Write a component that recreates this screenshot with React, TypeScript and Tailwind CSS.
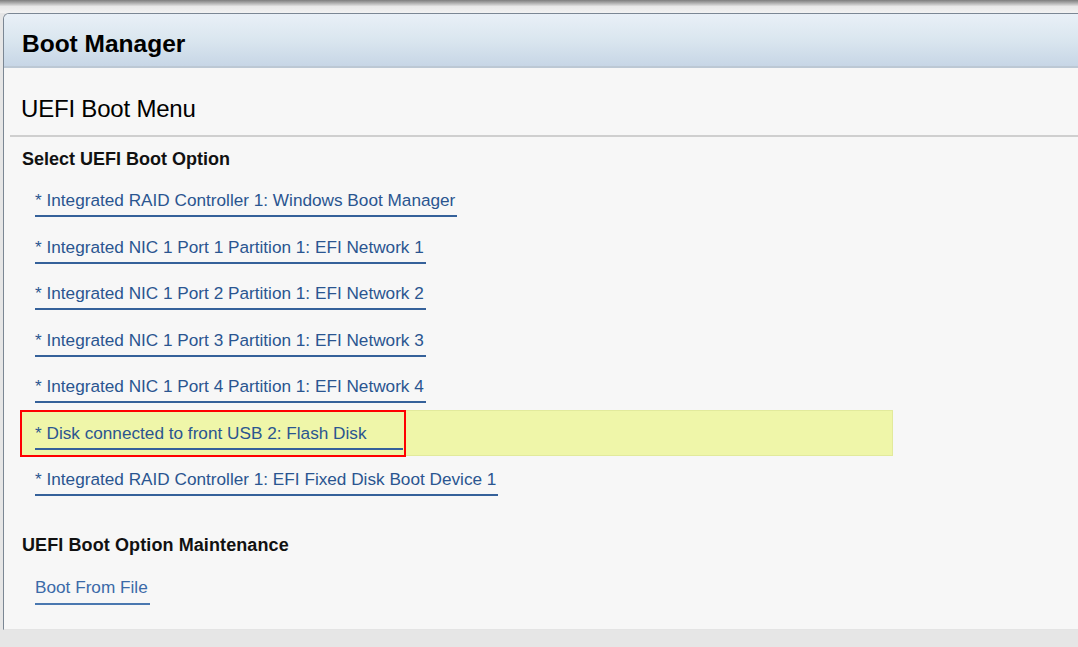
const bootOptions = [
  '* Integrated RAID Controller 1: Windows Boot Manager',
  '* Integrated NIC 1 Port 1 Partition 1: EFI Network 1',
  '* Integrated NIC 1 Port 2 Partition 1: EFI Network 2',
  '* Integrated NIC 1 Port 3 Partition 1: EFI Network 3',
  '* Integrated NIC 1 Port 4 Partition 1: EFI Network 4',
  '* Disk connected to front USB 2: Flash Disk',
  '* Integrated RAID Controller 1: EFI Fixed Disk Boot Device 1',
];

const SELECTED = 5;

function OptionRow({ label, selected }: { label: string; selected?: boolean }) {
  return (
    <div
      className={`relative ml-[16px] h-[46.5px] ${
        selected ? 'w-[873px] bg-[#eff6a9] border border-[#e2ea9c]' : ''
      }`}
    >
      {selected && (
        <span className="absolute -left-[1px] -top-[1px] h-[47px] w-[386px] border-2 border-[#ff0000]"></span>
      )}
      <a
        href="#"
        className={`inline-block ${selected ? 'ml-[14px] pt-[12px] pr-[37px]' : 'ml-[15px] pt-[13px] pr-[2px]'} pb-[5px] text-[17.2px] leading-[20px] text-[#2a5590] border-b-2 border-[#35619a]`}
      >
        {label}
      </a>
    </div>
  );
}

export default function App() {
  return (
    <div
      className="w-full h-[647px] bg-[#e6e6e6] overflow-hidden flex flex-col"
      style={{ fontFamily: '"Liberation Sans", Arial, sans-serif' }}
    >
      {/* top shadow strip */}
      <div className="h-[13px] bg-gradient-to-b from-[#7d7d7d] via-[#e8e8e8] to-[#f2f2f2]"></div>

      <div className="ml-[3px] h-[617px] rounded-tl-[6px] border-l border-t border-[#7b8794] bg-[#f7f7f7] border-b border-b-[#e4e4e4] overflow-hidden">
        {/* Header */}
        <div className="h-[54px] flex items-center pl-[18px] pt-[8px] bg-gradient-to-b from-[#e9f0f7] via-[#dae6ef] to-[#c7d6e6] border-b-2 border-[#bcc8d4]">
          <h1 className="text-[24.5px] font-bold text-black">Boot Manager</h1>
        </div>

        <div className="ml-[6px] pl-[11px] pt-[27px] pb-[12px] border-b-2 border-[#cfcfcf]">
          <h2 className="text-[24px] leading-[28px] text-black tracking-[-0.2px]">UEFI Boot Menu</h2>
        </div>

        <h3 className="pl-[18px] pt-[11px] text-[18px] leading-[22px] font-bold text-[#111]">
          Select UEFI Boot Option
        </h3>

        <div className="mt-[7px]">
          {bootOptions.map((label, i) => (
            <OptionRow key={label} label={label} selected={i === SELECTED} />
          ))}
        </div>

        <h3 className="mt-[31px] pl-[18px] text-[18px] leading-[22px] font-bold text-[#111] tracking-[0.1px]">
          UEFI Boot Option Maintenance
        </h3>

        <div className="ml-[16px] mt-[6px] h-[46.5px]">
          <a
            href="#"
            className="inline-block ml-[15px] pt-[15px] pb-[6px] pr-[2px] text-[17.2px] leading-[20px] text-[#3b6aa8] border-b-2 border-[#4a78b0]"
          >
            Boot From File
          </a>
        </div>
      </div>
    </div>
  );
}
